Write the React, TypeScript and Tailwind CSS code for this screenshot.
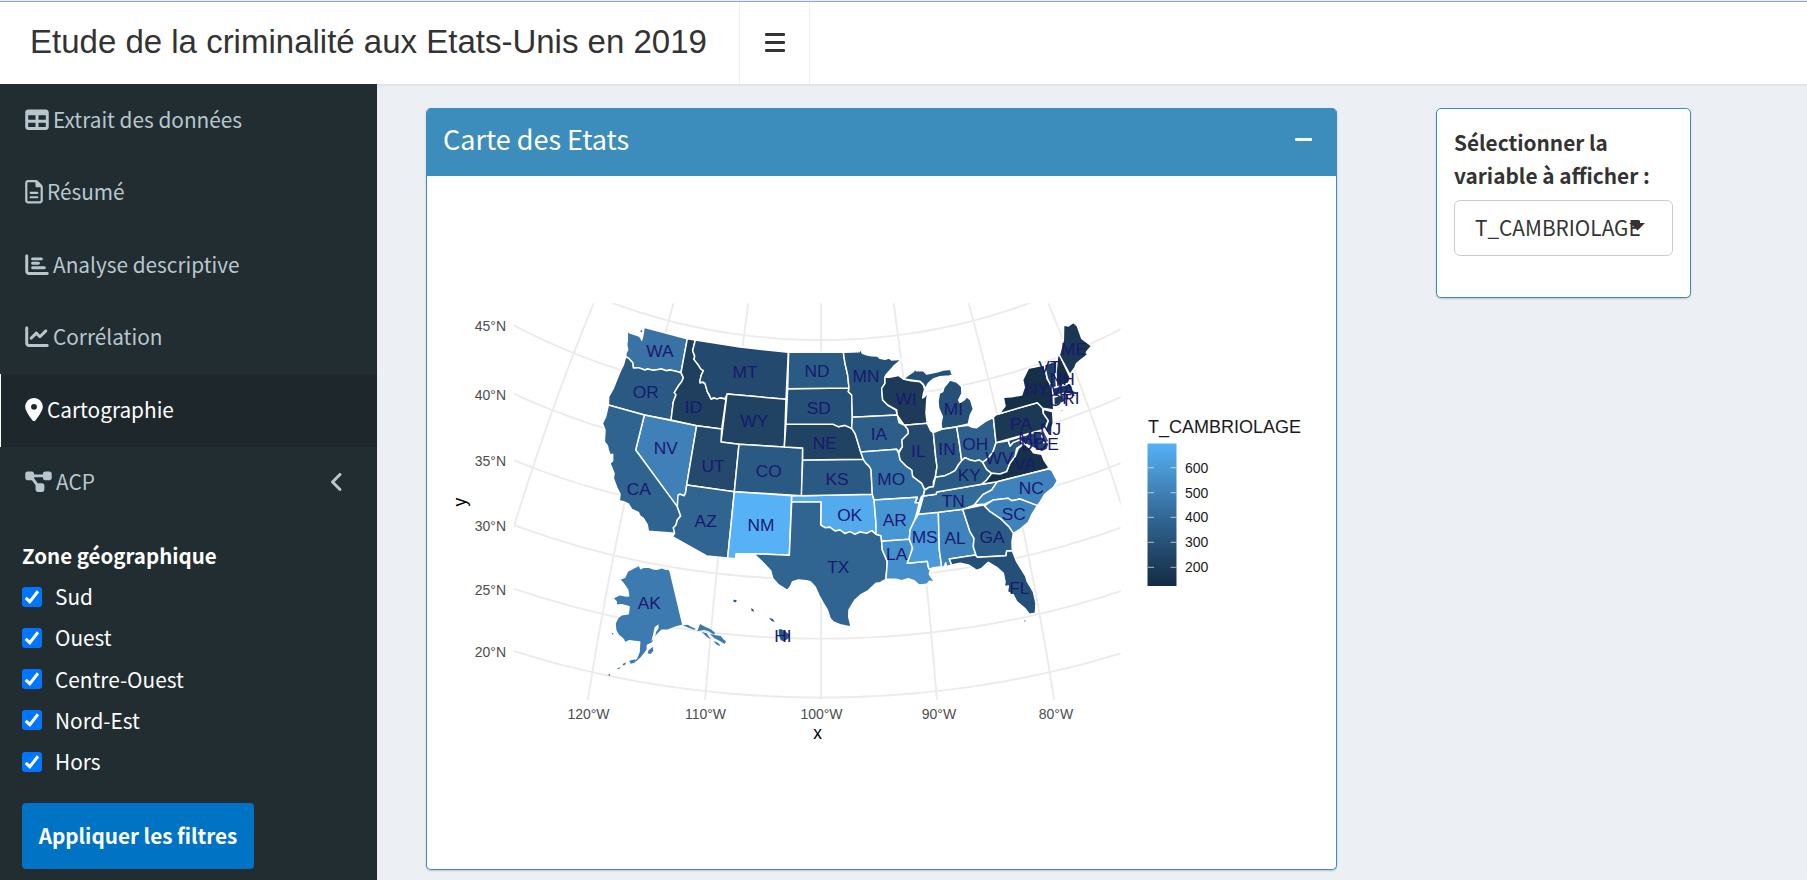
import React from "react";
import {
  FaTable,
  FaRegFileLines,
  FaChartBar,
  FaChartLine,
  FaLocationDot,
  FaDiagramProject,
  FaAngleLeft,
} from "react-icons/fa6";

const SANS = "font-['Noto_Sans_CJK_SC','Source_Sans_Pro',sans-serif]";

/* ---------- map data (three units per pixel) ---------- */

type Shape = [fill: string, points: string];

const STATES: Shape[] = [
  ["#3972a5", "112,93 120,99 132,103 145,107 152,112 155,120 158,108 160,98 162,82 292,116 273,218 255,213 240,210 228,212 215,207 190,211 172,207 165,210 145,203 130,204 128,188 116,175 107,170 108,158 113,150 110,135 112,120"],
  ["#2a5a84", "107,170 116,175 128,188 130,204 145,203 165,210 172,207 190,211 215,207 228,212 240,210 255,213 273,218 280,233 275,245 265,258 253,278 258,285 250,305 243,360 163,345 55,315 56,290 70,265 82,235 90,215 100,195"],
  ["#1f3f5f", "292,116 316,120 308,152 314,168 312,178 325,195 340,212 334,225 330,245 345,250 352,275 363,297 380,293 405,296 410,283 395,387 320,377 243,360 250,305 258,285 253,278 265,258 275,245 280,233 273,218"],
  ["#24496e", "316,120 450,141 595,157 588,298 412,282 405,296 392,293 380,297 372,293 363,297 358,285 352,275 345,250 338,246 330,249 330,240 334,225 340,212 332,207 325,195 312,178 314,168 308,152"],
  ["#204263", "411,282 588,298 583,441 447,433 393,426"],
  ["#3f80b8", "163,345 320,377 290,555 287,577 283,587 270,583 264,590 262,622 137,450"],
  ["#2f6490", "55,315 163,345 137,450 262,620 272,648 262,660 258,675 250,683 254,700 175,694 172,675 160,655 150,648 145,637 125,628 115,612 100,605 88,602 90,582 80,562 70,535 72,520 66,505 60,490 68,482 68,463 60,465 55,450 52,437 43,425 45,390 37,370 47,350"],
  ["#24496c", "320,377 395,387 393,426 447,433 433,575 290,555"],
  ["#2a5a84", "447,433 583,441 638,444 635,587 433,575"],
  ["#306491", "290,555 433,575 413,774 350,768 247,710 254,700 250,683 258,675 262,660 272,648 262,620 264,585 270,583 283,587 287,577"],
  ["#56b1f7", "433,575 605,587 598,766 490,761 438,761 437,776 413,774"],
  ["#53abee", "605,588 634,587 847,583 852,600 858,670 858,703 845,692 830,700 810,696 795,703 780,695 765,701 750,690 735,693 720,682 705,683 692,675 693,606 605,606"],
  ["#306491", "605,606 693,606 692,675 705,683 720,682 735,693 750,690 765,701 780,695 795,703 810,696 830,700 845,692 858,703 873,707 877,750 892,785 888,838 870,848 858,850 835,872 812,885 795,900 777,930 776,950 783,978 778,980 750,974 730,966 720,955 712,930 700,910 687,887 675,860 662,846 650,842 625,840 608,845 600,862 592,871 565,854 548,835 542,812 515,784 490,761 598,766"],
  ["#2a5a84", "638,480 820,478 828,490 836,497 843,508 847,583 634,587"],
  ["#204263", "588,372 730,373 745,380 765,376 785,385 795,400 803,425 812,455 820,478 638,480 638,444 583,441"],
  ["#255077", "593,266 777,264 775,275 785,285 787,352 785,385 765,376 745,380 730,373 588,372"],
  ["#2a5b85", "596,156 760,157 765,190 773,225 777,264 593,266"],
  ["#255077", "760,157 808,155 810,142 817,160 832,165 845,167 862,168 870,175 885,178 897,174 905,180 935,178 910,200 888,225 885,232 885,250 875,265 878,300 893,315 918,330 922,345 787,352 785,285 775,275 777,264 773,225 765,190"],
  ["#1d3b59", "885,232 898,232 918,228 925,226 940,237 962,242 990,245 1000,255 1004,268 1000,282 998,294 1004,290 1013,275 1010,305 1008,340 1012,370 943,376 922,346 920,330 893,315 878,300 875,265 885,250"],
  ["#255077", "940,237 955,225 970,215 982,195 978,212 1000,212 1010,222 1040,216 1060,210 1082,208 1085,220 1098,222 1078,228 1050,230 1030,237 1015,250 1006,266 1000,253 990,244 962,240"],
  ["#255077", "1055,387 1053,370 1057,350 1046,325 1044,305 1048,280 1058,275 1062,262 1072,250 1080,240 1100,246 1115,260 1116,280 1106,300 1110,308 1122,300 1130,290 1142,300 1150,327 1141,345 1135,372 1100,380"],
  ["#24496c", "943,376 1012,370 1022,392 1030,398 1037,470 1041,500 1036,530 1030,545 1030,560 1017,562 1004,570 995,550 968,530 965,510 950,500 930,480 926,460 937,440 935,420 955,400 953,388"],
  ["#28567f", "1030,398 1055,388 1100,381 1108,430 1115,482 1105,495 1095,512 1080,520 1065,527 1045,530 1036,532 1041,500 1037,470"],
  ["#2d608c", "1100,380 1135,376 1147,382 1160,383 1185,365 1210,352 1218,428 1208,458 1190,478 1178,487 1168,480 1155,483 1140,480 1125,473 1115,482 1108,430"],
  ["#2c5e89", "787,352 922,345 927,368 943,376 953,388 955,400 935,420 937,440 926,455 920,448 812,456 803,425 795,400 785,385"],
  ["#346fa1", "812,456 920,448 926,460 930,480 950,500 965,510 968,530 995,550 1004,570 1000,585 993,592 988,608 975,608 982,592 852,600 847,583 843,508 836,497 828,490 820,478"],
  ["#4897d5", "852,600 982,592 975,608 988,608 980,640 972,665 960,690 958,718 875,724 873,707 858,703 858,670"],
  ["#458fcc", "875,724 958,718 968,740 962,765 952,790 1012,784 1014,800 1022,808 1018,822 1024,832 1035,846 1018,844 1012,852 1000,854 985,854 972,842 955,836 935,842 918,838 888,837 892,785 877,750"],
  ["#4a99d9", "985,643 1045,637 1048,750 1055,800 1030,803 1017,808 1012,784 952,790 968,745 958,718 960,690 972,665"],
  ["#3f83bd", "1045,637 1118,628 1140,695 1152,715 1150,740 1158,765 1078,777 1085,795 1070,800 1067,788 1062,802 1055,800 1048,750"],
  ["#336b9b", "1000,588 1038,583 1040,576 1175,553 1222,545 1205,570 1180,583 1165,600 1153,615 1118,628 1045,637 985,643 993,615"],
  ["#2a5b85", "1000,588 1004,570 1017,562 1030,560 1036,532 1065,527 1080,520 1095,512 1105,495 1115,482 1125,473 1140,480 1155,483 1168,480 1178,487 1190,508 1205,520 1190,540 1175,553 1040,576 1038,583"],
  ["#285680", "1218,428 1255,422 1260,438 1270,427 1288,420 1303,430 1280,445 1275,470 1260,490 1250,515 1230,522 1205,520 1190,508 1178,487 1190,478 1208,458"],
  ["#17304a", "1175,553 1190,540 1205,520 1230,522 1250,515 1260,490 1275,470 1285,445 1303,430 1325,450 1330,458 1355,463 1362,480 1375,500 1375,506 1222,545"],
  ["#23486b", "1255,421 1353,391 1360,425 1378,428 1372,448 1355,456 1335,446 1322,440 1303,430 1288,420 1270,427 1260,438"],
  ["#17304a", "1373,450 1377,450 1373,482"],
  ["#2a5b85", "1353,391 1362,392 1378,425 1361,428"],
  ["#3f83bd", "1222,545 1375,507 1385,510 1402,543 1390,562 1365,582 1348,610 1342,617 1290,597 1265,602 1255,595 1210,600 1185,612 1153,615 1165,600 1180,583 1205,570"],
  ["#3f83bd", "1183,618 1210,600 1255,595 1265,602 1290,597 1342,617 1325,645 1315,667 1290,688 1270,700 1258,682 1230,655 1200,635"],
  ["#2b5c87", "1118,628 1183,614 1183,618 1200,635 1230,655 1258,682 1270,700 1266,725 1267,752 1250,753 1248,767 1160,772 1150,740 1152,715 1140,695"],
  ["#245077", "1078,777 1156,765 1162,772 1248,767 1250,753 1267,752 1280,785 1307,828 1312,845 1330,875 1338,910 1336,940 1318,943 1304,925 1280,905 1270,885 1252,875 1255,858 1243,860 1245,845 1240,820 1220,802 1195,787 1175,805 1160,811 1135,795 1110,790 1085,795"],
  ["#1b3854", "1210,352 1218,344 1228,341 1342,308 1358,325 1360,340 1375,362 1365,385 1353,391 1228,425 1218,428"],
  ["#162f49", "1228,341 1245,318 1240,292 1265,290 1295,285 1303,262 1298,240 1315,205 1363,195 1372,238 1385,255 1390,290 1391,330 1358,325 1342,308"],
  ["#162f49", "1391,343 1430,320 1420,332 1395,345"],
  ["#193450", "1360,328 1388,335 1390,370 1378,405 1365,390 1375,362 1360,340"],
  ["#1e4060", "1363,195 1403,180 1398,220 1400,262 1386,265 1372,235"],
  ["#162d46", "1403,165 1410,168 1442,235 1435,250 1400,262 1398,220"],
  ["#1a3753", "1408,165 1420,120 1421,75 1435,78 1450,67 1462,78 1475,115 1505,138 1490,155 1488,168 1475,178 1460,190 1455,202 1440,224"],
  ["#1b3854", "1386,265 1435,252 1445,255 1450,272 1467,278 1460,285 1440,282 1425,278 1390,290"],
  ["#1b3854", "1391,292 1422,283 1425,305 1392,318"],
  ["#193450", "1424,283 1435,281 1438,298 1426,303"],
  ["#3c7ab0", "148,795 152,806 160,802 175,801 188,806 200,808 215,803 228,808 234,806 240,812 279,976 255,982 235,990 215,991 203,1003 196,1012 191,1020 188,1028 172,1036 172,1050 155,1072 140,1086 125,1088 140,1074 147,1056 149,1026 130,1024 118,1022 105,1029 100,1018 85,1005 77,990 75,970 84,952 95,944 115,941 117,920 95,914 78,916 79,905 68,894 90,884 105,887 116,888 113,870 103,855 96,846 88,838 104,832 112,814 130,804"],
];

/* inlets drawn in the paper colour over the shapes above */
const INLETS = "184,1024 190,1000 194,982 205,973 206,985 198,996 196,1010";

const BITS: Shape[] = [
  ["#3c7ab0", "188,1040 190,1052 182,1062 173,1060 175,1052"],
  ["#3c7ab0", "118,1082 136,1078 134,1088 122,1091"],
  ["#3c7ab0", "98,1092 108,1087 106,1093 100,1097"],
  ["#3c7ab0", "80,1106 92,1101 88,1107"],
  ["#3c7ab0", "56,1122 60,1122 60,1127 56,1127"],
  ["#3c7ab0", "64,998 71,1000 68,1004"],
  ["#3c7ab0", "279,976 294,974 300,979 318,987 312,989 290,981"],
  ["#3c7ab0", "322,994 330,972 345,980 362,988 375,998 372,1004 356,994 342,990"],
  ["#3c7ab0", "335,996 350,1000 362,1018 352,1012"],
  ["#3c7ab0", "360,1002 378,1006 392,1008 400,1018 408,1024 404,1032 388,1022 372,1014"],
  ["#3c7ab0", "370,1022 384,1028 392,1038 380,1034"],
  ["#2a5a84", "430,899 440,900 438,907 431,906"],
  ["#2a5a84", "483,925 490,928 492,935 485,933"],
  ["#2a5a84", "537,954 548,956 554,965 546,964"],
  ["#2a5a84", "566,988 574,988 585,994 600,1005 594,1016 581,1024 572,1020 567,1004"],
  ["#3972a5", "151,92 156,90 156,97 152,97"],
  ["#8ba3c0", "1302,961 1307,961 1306,965 1302,965"],
];

const LABELS: [string, number, number][] = [
  ["WA", 210, 153], ["MT", 465, 216], ["OR", 167, 276], ["ID", 310, 319], ["WY", 493, 363],
  ["NV", 227, 444], ["UT", 369, 496], ["CO", 536, 513], ["CA", 146, 565], ["ND", 681, 213],
  ["SD", 686, 322], ["NE", 704, 427], ["MN", 828, 228], ["WI", 948, 297], ["MI", 1090, 325],
  ["IA", 867, 402], ["IL", 985, 453], ["IN", 1071, 445], ["OH", 1156, 430], ["KS", 741, 535],
  ["MO", 904, 535], ["KY", 1138, 523], ["TN", 1090, 601], ["WV", 1228, 474], ["PA", 1293, 370],
  ["VA", 1305, 490], ["NY", 1340, 265], ["VT", 1378, 200], ["NH", 1417, 235], ["MA", 1415, 268],
  ["CT", 1410, 298], ["RI", 1443, 294], ["ME", 1452, 145], ["NJ", 1382, 387], ["MD", 1325, 414],
  ["DC", 1330, 432], ["DE", 1370, 431], ["NC", 1324, 564], ["SC", 1271, 641], ["AZ", 347, 661],
  ["NM", 513, 673], ["OK", 779, 643], ["AR", 914, 658], ["MS", 1004, 709], ["AL", 1095, 712],
  ["GA", 1206, 710], ["LA", 920, 762], ["FL", 1288, 862], ["TX", 745, 799], ["AK", 178, 908],
  ["HI", 579, 1006],
];

/* Lambert azimuthal equal-area projection centred on 45°N 100°W */
function project(lat: number, lon: number): string {
  const d = Math.PI / 180;
  const p = lat * d;
  const l = (lon + 100) * d;
  const p0 = 45 * d;
  const k = Math.sqrt(2 / (1 + Math.sin(p0) * Math.sin(p) + Math.cos(p0) * Math.cos(p) * Math.cos(l)));
  const x = k * Math.cos(p) * Math.sin(l);
  const y = k * (Math.cos(p0) * Math.sin(p) - Math.sin(p0) * Math.cos(p) * Math.cos(l));
  return `${(693 + 2062 * x).toFixed(1)},${(300 - 2062 * y).toFixed(1)}`;
}

const steps = (from: number, to: number) => Array.from({ length: to - from + 1 }, (_, i) => from + i);
const GRATICULE = [
  ...[20, 25, 30, 35, 40, 45, 50].map((lat) => steps(-140, -60).map((lon) => project(lat, lon)).join(" ")),
  ...[-130, -120, -110, -100, -90, -80, -70].map((lon) => steps(14, 60).map((lat) => project(lat, lon)).join(" ")),
];

const LAT_AXIS: [string, number][] = [
  ["45°N", 325.5], ["40°N", 394.5], ["35°N", 460.5], ["30°N", 526], ["25°N", 589.5], ["20°N", 652],
];
const LON_AXIS: [string, number][] = [
  ["120°W", 588.5], ["110°W", 705.5], ["100°W", 821.5], ["90°W", 939], ["80°W", 1056],
];
const LEGEND: [string, number][] = [
  ["600", 467.7], ["500", 492.7], ["400", 517.3], ["300", 542.3], ["200", 567.3],
];

function StatesMap() {
  return (
    <svg viewBox="427 176 909 693" className="block h-[693px] w-[909px] font-['Liberation_Sans',Arial,sans-serif]">
      <defs>
        <clipPath id="panel">
          <rect x={-228} y={10} width={1820} height={1190} />
        </clipPath>
        <linearGradient id="scale" x1="0" y1="0" x2="0" y2="1">
          <stop offset="0" stopColor="#56b1f7" />
          <stop offset="0.25" stopColor="#458ec7" />
          <stop offset="0.5" stopColor="#336a98" />
          <stop offset="0.75" stopColor="#234a6d" />
          <stop offset="1" stopColor="#132b43" />
        </linearGradient>
      </defs>
      <g transform="translate(590 300) scale(0.333333)">
        <g clipPath="url(#panel)">
          {GRATICULE.map((points, i) => (
            <polyline key={i} points={points} fill="none" stroke="#ebebeb" strokeWidth={5.5} />
          ))}
          {STATES.map(([fill, points], i) => (
            <polygon key={i} points={points} fill={fill} stroke="#ffffff" strokeWidth={4.5} strokeLinejoin="round" />
          ))}
          <polygon points={INLETS} fill="#ffffff" />
          {BITS.map(([fill, points], i) => (
            <polygon key={i} points={points} fill={fill} />
          ))}
        </g>
        <g fill="#191970" fontSize={52} textAnchor="middle">
          {LABELS.map(([name, x, y], i) => (
            <text key={i} x={x} y={y + 19}>
              {name}
            </text>
          ))}
        </g>
      </g>
      <g fill="#4d4d4d" fontSize={14}>
        {LAT_AXIS.map(([name, y]) => (
          <text key={name} x={506} y={y + 5} textAnchor="end">
            {name}
          </text>
        ))}
        {LON_AXIS.map(([name, x]) => (
          <text key={name} x={x} y={718.5} textAnchor="middle">
            {name}
          </text>
        ))}
      </g>
      <g fill="#000000" fontSize={17.5}>
        <text x={817.5} y={739} textAnchor="middle">
          x
        </text>
        <text transform="translate(466 502) rotate(-90)" textAnchor="middle">
          y
        </text>
        <text x={1148} y={432.5} fontSize={18} fill="#1a1a1a">
          T_CAMBRIOLAGE
        </text>
      </g>
      <rect x={1147.5} y={443.5} width={29} height={142.5} fill="url(#scale)" />
      {LEGEND.map(([name, y]) => (
        <g key={name}>
          <path d={`M1148 ${y}h6M1170.500 ${y}h6`} stroke="#ffffff" strokeOpacity={0.5} strokeWidth={1.3} />
          <text x={1185} y={y + 5} fontSize={14} fill="#1a1a1a">
            {name}
          </text>
        </g>
      ))}
    </svg>
  );
}

/* ---------- page ---------- */

const MENU = [
  { label: "Extrait des données", Icon: FaTable, width: "w-[24px]" },
  { label: "Résumé", Icon: FaRegFileLines, width: "w-[18px]" },
  { label: "Analyse descriptive", Icon: FaChartBar, width: "w-[24px]" },
  { label: "Corrélation", Icon: FaChartLine, width: "w-[24px]" },
  { label: "Cartographie", Icon: FaLocationDot, width: "w-[18px]", active: true },
  { label: "ACP", Icon: FaDiagramProject, width: "w-[27px]", more: true },
];

const ZONES = ["Sud", "Ouest", "Centre-Ouest", "Nord-Est", "Hors"];

function Header() {
  return (
    <header className="flex h-[84px] items-stretch border-t border-[#e9edf3] bg-white">
      <div className="flex w-full items-stretch border-t border-[#8ea6d6]">
        <div className="flex w-[740px] items-center border-r border-[#eeeeee] pb-[2px] pl-[30px] font-['Liberation_Sans',Arial,sans-serif] text-[33px] whitespace-nowrap text-[#333]">
          Etude de la criminalité aux Etats-Unis en 2019
        </div>
        <button
          className="flex w-[70px] flex-col items-center justify-center gap-[5px] border-r border-[#eeeeee] pb-[2px]"
          aria-label="Menu"
        >
          <span className="h-[3px] w-[20px] rounded-[1px] bg-[#333]" />
          <span className="h-[3px] w-[20px] rounded-[1px] bg-[#333]" />
          <span className="h-[3px] w-[20px] rounded-[1px] bg-[#333]" />
        </button>
      </div>
    </header>
  );
}

function Sidebar() {
  return (
    <aside className="flex h-[796px] w-[377px] shrink-0 flex-col bg-[#222d32]">
      <nav>
        {MENU.map(({ label, Icon, width, active, more }) => (
          <a
            key={label}
            className={
              active
                ? "flex h-[72.5px] items-center border-l border-white bg-[#1e282c] pr-[32px] pb-[2px] pl-[24px] text-[20.8px] whitespace-nowrap text-white"
                : "flex h-[72.5px] items-center border-l border-transparent pr-[32px] pb-[2px] pl-[24px] text-[20.8px] whitespace-nowrap text-[#b8c7ce]"
            }
          >
            <Icon className={`${width} mr-[4px] h-[23.5px] shrink-0`} />
            <span>{label}</span>
            {more && <FaAngleLeft className="ml-auto h-[24px] w-[16px]" />}
          </a>
        ))}
      </nav>
      <div className="pt-[20px] pl-[22px] text-[20.8px] text-white">
        <div className="h-[32px] text-[20.5px] leading-[32px] font-bold">Zone géographique</div>
        <div className="mt-[5px]">
          {ZONES.map((zone) => (
            <label key={zone} className="flex h-[41.25px] items-center gap-[13px] whitespace-nowrap">
              <span className="flex size-[20px] items-center justify-center rounded-[3px] bg-[#0075ff]">
                <svg viewBox="0 0 20 20" className="size-[20px]">
                  <path d="M3.700 10.800 7.800 14.700 16 4.300" fill="none" stroke="#fff" strokeWidth="3" />
                </svg>
              </span>
              <span>{zone}</span>
            </label>
          ))}
        </div>
        <button className="mt-[21px] flex h-[66px] w-[232px] items-center justify-center rounded-[4px] bg-[#0073c5] pb-[2px] text-[20.7px] font-bold whitespace-nowrap">
          Appliquer les filtres
        </button>
      </div>
    </aside>
  );
}

export default function App() {
  return (
    <div className={`h-[880px] w-[1807px] overflow-hidden bg-[#ecf0f5] ${SANS}`}>
      <Header />
      <div className="flex items-start">
        <Sidebar />
        <main className="flex grow items-start gap-[99px] pt-[24px] pl-[49px] shadow-[inset_0_2px_2px_rgba(0,0,0,0.05)]">
          <section className="w-[911px] overflow-hidden rounded-[5px] border border-t-0 border-[#3c8dbc] bg-white shadow-[0_1px_2px_rgba(0,0,0,0.2)]">
            <div className="flex h-[68px] items-center justify-between bg-[#3c8dbc] pr-[24px] pb-[5px] pl-[16px] text-[27px] text-white">
              <h3>Carte des Etats</h3>
              <span className="mb-px h-[3px] w-[17px] rounded-[1px] bg-white" />
            </div>
            <StatesMap />
          </section>
          <section className="h-[190px] w-[255px] rounded-[5px] border border-[#3c8dbc] bg-white px-[17px] pt-[17px] text-[20.8px] text-[#333] shadow-[0_1px_2px_rgba(0,0,0,0.2)]">
            <div className="leading-[33px] font-bold">
              Sélectionner la
              <br />
              variable à afficher :
            </div>
            <div className="relative mt-[8px] flex h-[56px] w-[219px] items-center rounded-[6px] border border-[#ccc] pl-[20px]">
              <span className="whitespace-nowrap">T_CAMBRIOLAGE</span>
              <svg viewBox="0 0 16 10" className="absolute top-[20px] left-[174px] h-[10px] w-[16px]">
                <path d="M0 2h2V0h9v2h5L8.500 9.500 4 5z" fill="#333" />
              </svg>
            </div>
          </section>
        </main>
      </div>
    </div>
  );
}
